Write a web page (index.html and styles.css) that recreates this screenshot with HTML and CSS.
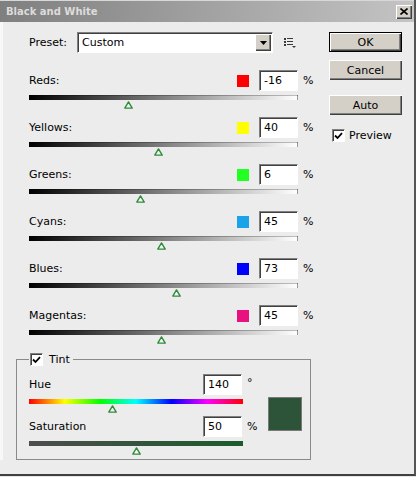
FILE: index.html
```html
<!DOCTYPE html>
<html lang="en">
<head>
  <meta charset="UTF-8">
  <title>Black and White</title>
  <link rel="stylesheet" href="styles.css">
</head>
<body>
  <div class="window">
    <div class="titlebar">
      <span class="title">Black and White</span>
      <button class="close">
        <svg width="8" height="7" viewBox="0 0 8 7"><path d="M0.5 0.5 L7.5 6.5 M7.5 0.5 L0.5 6.5" stroke="#000" stroke-width="1.6"/></svg>
      </button>
    </div>

    <div class="body">
      <div class="main">
        <div class="preset">
          <span class="preset-label">Preset:</span>
          <div class="select">
            <span class="select-value">Custom</span>
            <span class="select-arrow">
              <svg width="7" height="4" viewBox="0 0 7 4"><path d="M0 0 H7 L3.5 4 Z" fill="#000"/></svg>
            </span>
          </div>
          <svg class="preset-menu" width="13" height="10" viewBox="0 0 13 10" fill="#3a3a3a">
            <rect x="0" y="0" width="2" height="2"/><rect x="3" y="0" width="6" height="1"/>
            <rect x="0" y="3" width="2" height="2"/><rect x="3" y="3" width="6" height="1"/>
            <rect x="0" y="6" width="2" height="2"/><rect x="3" y="6" width="6" height="1"/>
            <path d="M8 8 H12 L10 10 Z"/>
          </svg>
        </div>

        <div class="channels">
          <div class="channel">
            <div class="channel-top">
              <span class="channel-name">Reds:</span>
              <span class="swatch" style="background:#ff0000"></span>
              <input class="value" type="text" value="-16">
              <span class="unit">%</span>
            </div>
            <div class="slider">
              <div class="bar"></div>
              <svg class="thumb" style="left:36.8%" width="9" height="8" viewBox="0 0 9 8"><path d="M4.5 0.9 L8.2 7.1 H0.8 Z" fill="#f4fbf4" stroke="#2f8a3a" stroke-width="1.4" stroke-linejoin="round"/></svg>
            </div>
          </div>

          <div class="channel">
            <div class="channel-top">
              <span class="channel-name">Yellows:</span>
              <span class="swatch" style="background:#ffff00"></span>
              <input class="value" type="text" value="40">
              <span class="unit">%</span>
            </div>
            <div class="slider">
              <div class="bar"></div>
              <svg class="thumb" style="left:48%" width="9" height="8" viewBox="0 0 9 8"><path d="M4.5 0.9 L8.2 7.1 H0.8 Z" fill="#f4fbf4" stroke="#2f8a3a" stroke-width="1.4" stroke-linejoin="round"/></svg>
            </div>
          </div>

          <div class="channel">
            <div class="channel-top">
              <span class="channel-name">Greens:</span>
              <span class="swatch" style="background:#22ff22"></span>
              <input class="value" type="text" value="6">
              <span class="unit">%</span>
            </div>
            <div class="slider">
              <div class="bar"></div>
              <svg class="thumb" style="left:41.2%" width="9" height="8" viewBox="0 0 9 8"><path d="M4.5 0.9 L8.2 7.1 H0.8 Z" fill="#f4fbf4" stroke="#2f8a3a" stroke-width="1.4" stroke-linejoin="round"/></svg>
            </div>
          </div>

          <div class="channel">
            <div class="channel-top">
              <span class="channel-name">Cyans:</span>
              <span class="swatch" style="background:#1aa3e8"></span>
              <input class="value" type="text" value="45">
              <span class="unit">%</span>
            </div>
            <div class="slider">
              <div class="bar"></div>
              <svg class="thumb" style="left:49%" width="9" height="8" viewBox="0 0 9 8"><path d="M4.5 0.9 L8.2 7.1 H0.8 Z" fill="#f4fbf4" stroke="#2f8a3a" stroke-width="1.4" stroke-linejoin="round"/></svg>
            </div>
          </div>

          <div class="channel">
            <div class="channel-top">
              <span class="channel-name">Blues:</span>
              <span class="swatch" style="background:#0000ff"></span>
              <input class="value" type="text" value="73">
              <span class="unit">%</span>
            </div>
            <div class="slider">
              <div class="bar"></div>
              <svg class="thumb" style="left:54.6%" width="9" height="8" viewBox="0 0 9 8"><path d="M4.5 0.9 L8.2 7.1 H0.8 Z" fill="#f4fbf4" stroke="#2f8a3a" stroke-width="1.4" stroke-linejoin="round"/></svg>
            </div>
          </div>

          <div class="channel">
            <div class="channel-top">
              <span class="channel-name">Magentas:</span>
              <span class="swatch" style="background:#e8117f"></span>
              <input class="value" type="text" value="45">
              <span class="unit">%</span>
            </div>
            <div class="slider">
              <div class="bar"></div>
              <svg class="thumb" style="left:49%" width="9" height="8" viewBox="0 0 9 8"><path d="M4.5 0.9 L8.2 7.1 H0.8 Z" fill="#f4fbf4" stroke="#2f8a3a" stroke-width="1.4" stroke-linejoin="round"/></svg>
            </div>
          </div>
        </div>

        <fieldset class="tint">
          <legend class="tint-legend">
            <span class="check">
              <svg width="9" height="8" viewBox="0 0 9 8"><path d="M1 3.5 L3.5 6 L8 1.2" fill="none" stroke="#000" stroke-width="1.8"/></svg>
            </span>
            <span>Tint</span>
          </legend>
          <div class="tint-body">
            <div class="tint-sliders">
              <div class="tint-row">
                <div class="tint-top">
                  <span class="channel-name">Hue</span>
                  <input class="value" type="text" value="140">
                  <span class="tint-unit degree">°</span>
                </div>
                <div class="slider tint-slider">
                  <div class="bar hue-bar"></div>
                  <svg class="thumb" style="left:38.9%" width="9" height="8" viewBox="0 0 9 8"><path d="M4.5 0.9 L8.2 7.1 H0.8 Z" fill="#f4fbf4" stroke="#2f8a3a" stroke-width="1.4" stroke-linejoin="round"/></svg>
                </div>
              </div>
              <div class="tint-row">
                <div class="tint-top">
                  <span class="channel-name">Saturation</span>
                  <input class="value" type="text" value="50">
                  <span class="tint-unit">%</span>
                </div>
                <div class="slider tint-slider last">
                  <div class="bar sat-bar"></div>
                  <svg class="thumb" style="left:50%" width="9" height="8" viewBox="0 0 9 8"><path d="M4.5 0.9 L8.2 7.1 H0.8 Z" fill="#f4fbf4" stroke="#2f8a3a" stroke-width="1.4" stroke-linejoin="round"/></svg>
                </div>
              </div>
            </div>
            <div class="tint-swatch"></div>
          </div>
        </fieldset>
      </div>

      <div class="side">
        <button class="btn btn-default">OK</button>
        <button class="btn btn-cancel">Cancel</button>
        <button class="btn btn-auto">Auto</button>
        <label class="preview">
          <span class="check">
            <svg width="9" height="8" viewBox="0 0 9 8"><path d="M1 3.5 L3.5 6 L8 1.2" fill="none" stroke="#000" stroke-width="1.8"/></svg>
          </span>
          <span>Preview</span>
        </label>
      </div>
    </div>
  </div>
</body>
</html>
```

FILE: styles.css
```css
body {
  margin: 0;
  background: #e6e6e6;
  font-family: "DejaVu Sans", sans-serif;
  font-size: 11px;
  color: #000;
}
.window {
  width: 414px;
  height: 474px;
  background: #ececec;
  border-right: 2px solid #555;
  border-bottom: 2px solid #404040;
}
.titlebar {
  height: 21px;
  border-top: 1px solid #d8d8d8;
  background: linear-gradient(to right, #7f7f7f, #c4c4c4);
  display: flex;
  align-items: center;
  justify-content: space-between;
  padding: 0 2px 0 6px;
}
.title {
  font-weight: bold;
  font-size: 10px;
  color: #dcdcdc;
}
.close {
  width: 16px;
  height: 14px;
  padding: 0;
  border: none;
  background: #d4d0c8;
  box-shadow: inset 1px 1px #fff, inset -1px -1px #404040, inset -2px -2px #808080;
  display: flex;
  align-items: center;
  justify-content: center;
}
.body {
  display: flex;
  border-left: 3px solid #f8f8f8;
  padding-top: 10px;
}
.main {
  width: 295px;
  margin-left: 13px;
}

/* preset picker */
.preset {
  display: flex;
  align-items: center;
  height: 21px;
  padding-left: 13px;
}
.preset-label {
  width: 48px;
}
.select {
  width: 196px;
  height: 21px;
  box-sizing: border-box;
  display: flex;
  background: #fff;
  border: 1px solid;
  border-color: #808080 #fff #fff #808080;
  box-shadow: inset 1px 1px #404040;
}
.select-value {
  flex: 1;
  padding-left: 4px;
  line-height: 19px;
}
.select-arrow {
  width: 16px;
  height: 17px;
  margin: 1px;
  background: #d4d0c8;
  box-shadow: inset 1px 1px #fff, inset -1px -1px #404040, inset -2px -2px #808080;
  display: flex;
  align-items: center;
  justify-content: center;
}
.preset-menu {
  margin-left: 11px;
  margin-top: 1px;
}

/* channel sliders */
.channels {
  margin-top: 17px;
  padding-left: 13px;
}
.channel {
  height: 47px;
}
.channel-top,
.tint-top {
  display: flex;
  align-items: center;
  height: 21px;
}
.channel-name {
  flex: 1;
}
.swatch {
  width: 12px;
  height: 12px;
  margin-right: 10px;
}
.value {
  width: 39px;
  height: 21px;
  box-sizing: border-box;
  margin: 0;
  padding: 0 0 0 4px;
  font: inherit;
  color: #000;
  background: #fff;
  border: 1px solid;
  border-color: #808080 #fff #fff #808080;
  box-shadow: inset 1px 1px #404040;
  outline: none;
}
.unit {
  width: 8px;
  padding-left: 5px;
  white-space: nowrap;
}
.slider {
  position: relative;
  width: 269px;
  height: 22px;
  margin-top: 4px;
}
.bar {
  height: 5px;
  background: linear-gradient(to right, #000, #fff);
  box-shadow: inset 0 1px rgba(0, 0, 0, 0.25), inset -1px 0 #999;
}
.thumb {
  position: absolute;
  top: 6px;
  margin-left: -4px;
}

/* tint group */
.tint {
  margin: 1px 0 0;
  padding: 8px 7px 5px 12px;
  border: 1px solid #8a8a8a;
  min-width: 0;
}
.tint-legend {
  display: flex;
  align-items: center;
  gap: 6px;
  padding: 0 3px 0 1px;
}
.tint-body {
  display: flex;
}
.tint-sliders {
  width: 239px;
}
.tint-row {
  height: 42px;
}
.tint-row:last-child {
  height: auto;
}
.tint-unit {
  width: 21px;
  padding-left: 5px;
}
.degree {
  align-self: flex-start;
  padding-top: 2px;
}
.tint-slider {
  width: 214px;
  height: 17px;
}
.tint-slider.last {
  height: 13px;
}
.hue-bar {
  background: linear-gradient(to right, #f00, #ff0, #0f0, #0ff, #00f, #f0f, #f00);
  box-shadow: none;
}
.sat-bar {
  background: linear-gradient(to right, #4d4d4d, #1b5c2b);
  box-shadow: none;
}
.tint-swatch {
  width: 34px;
  height: 34px;
  box-sizing: border-box;
  margin-top: 23px;
  background: #2d5439;
  border: 1px solid #7a7a7a;
}

/* checkboxes */
.check {
  width: 13px;
  height: 13px;
  box-sizing: border-box;
  background: #fff;
  border: 1px solid;
  border-color: #808080 #fff #fff #808080;
  box-shadow: inset 1px 1px #404040;
  display: flex;
  align-items: center;
  justify-content: center;
}

/* buttons */
.side {
  width: 73px;
  margin-left: 18px;
  display: flex;
  flex-direction: column;
}
.btn {
  height: 20px;
  padding: 0;
  border: none;
  font: inherit;
  color: #000;
  background: #d4d0c8;
  box-shadow: inset 1px 1px #fff, inset -1px -1px #404040, inset -2px -2px #808080;
}
.btn-default {
  border: 1px solid #000;
}
.btn-cancel {
  margin-top: 8px;
}
.btn-auto {
  margin-top: 15px;
}
.preview {
  display: flex;
  align-items: center;
  gap: 4px;
  margin-top: 14px;
  padding-left: 3px;
}
```
